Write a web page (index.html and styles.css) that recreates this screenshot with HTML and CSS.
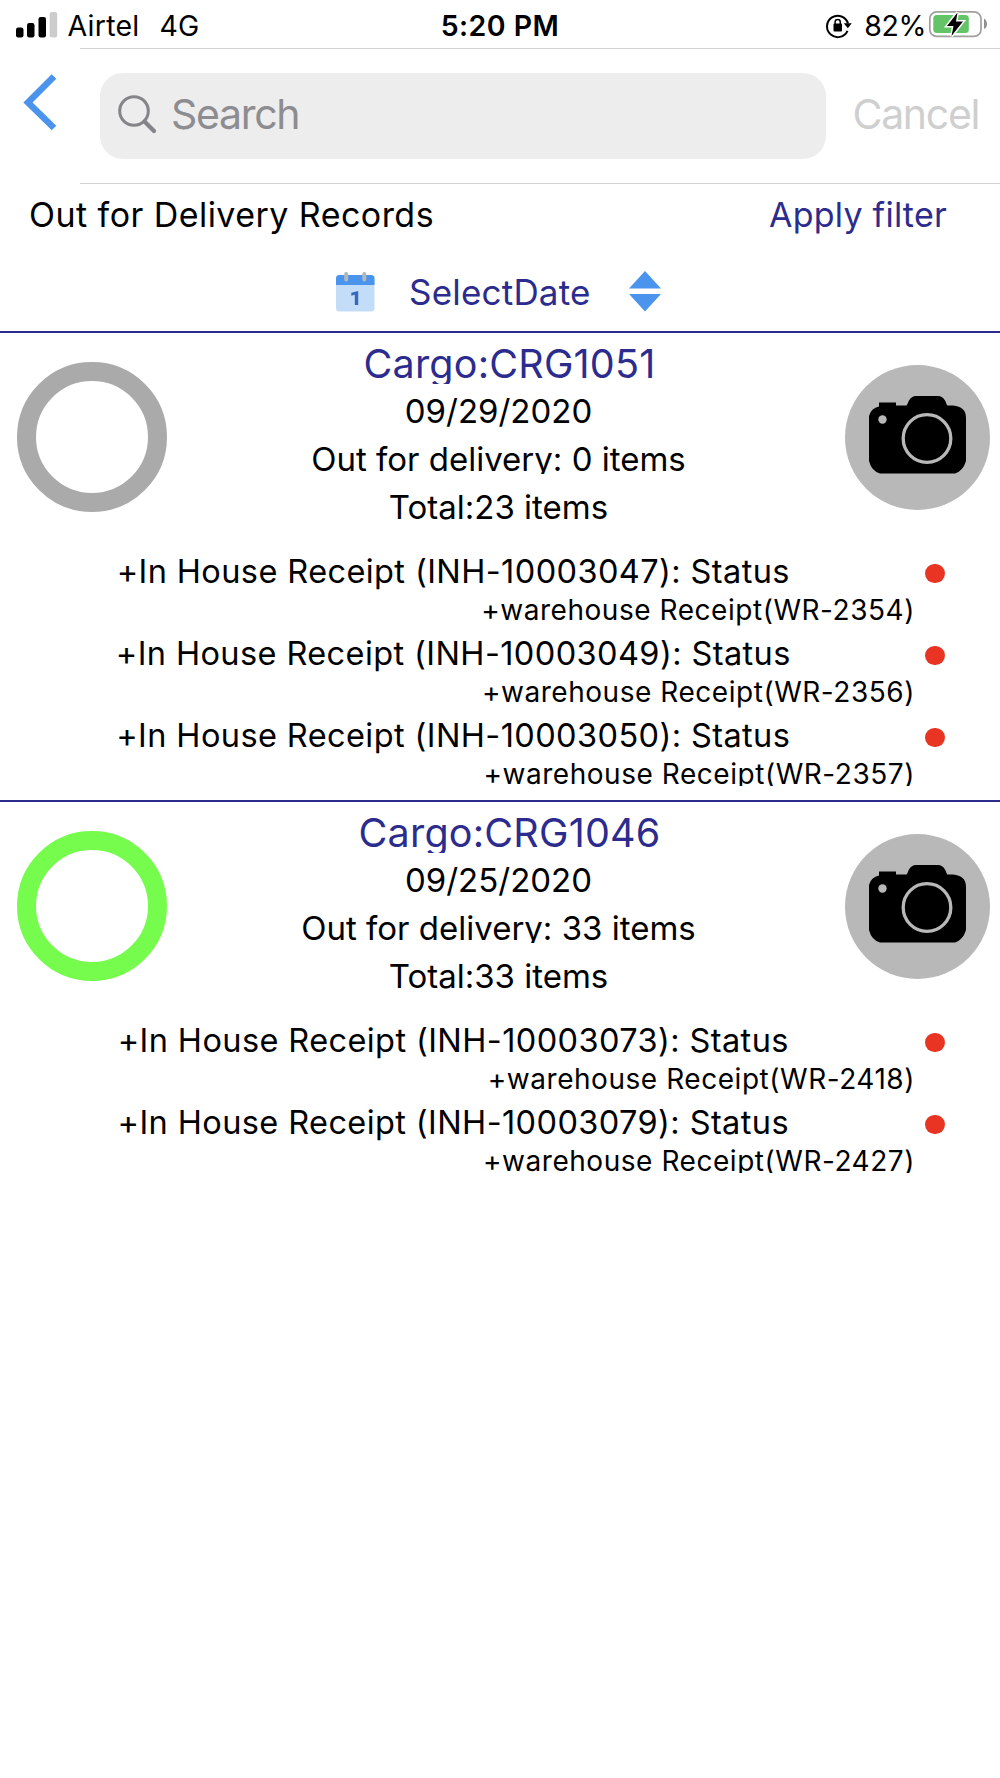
FILE: index.html
```
<!DOCTYPE html>
<html lang="en">
<head>
<meta charset="utf-8">
<title>Out for Delivery Records</title>
<link rel="stylesheet" href="styles.css">
</head>
<body>
<svg class="defs" width="0" height="0" aria-hidden="true">
  <symbol id="camera" viewBox="0 0 97 78">
    <path fill="#000" d="M10 9V6.500H27V9.500H37C38.500 9.500 38.500 7 40 4.500Q42.500 0 47 0H69Q73.500 0 76 4.500C77.500 7 77.500 9.500 79 9.500H84Q97 10.500 97 22V65Q94 75 86 77.500H11Q2.500 75 0 65V20Q2 12 10 10.500Z"/>
    <circle cx="58" cy="42.500" r="23.800" fill="none" stroke="#b8b8b8" stroke-width="3.300"/>
    <circle cx="13.500" cy="23.500" r="4.200" fill="#b8b8b8"/>
  </symbol>
</svg>

<header class="status">
  <div class="status-left">
    <svg width="42" height="26" viewBox="0 0 42 26">
      <rect x="0" y="15.500" width="7.500" height="10" rx="2.200"/>
      <rect x="11" y="11" width="7.500" height="14.500" rx="2.200"/>
      <rect x="22.500" y="5" width="7.500" height="20.500" rx="2.200"/>
      <rect x="33.700" y="0" width="7.500" height="25.500" rx="2.200" fill="#ccc"/>
    </svg>
    <span class="carrier">Airtel</span>
    <span class="network">4G</span>
  </div>
  <div class="clock">5:20 PM</div>
  <div class="status-right">
    <svg class="lock" width="28" height="26" viewBox="0 0 28 26">
      <path d="M22.500 17.800A10.700 10.700 0 1 1 23 10.500" fill="none" stroke="#000" stroke-width="2"/>
      <path d="M18.800 10.200H26.800L22.800 15.200Z"/>
      <rect x="8.500" y="10.500" width="8.500" height="8" rx="1"/>
      <path d="M10.100 12V9A2.600 2.600 0 0 1 15.300 9V12" fill="none" stroke="#000" stroke-width="1.500"/>
    </svg>
    <span class="percent">82%</span>
    <svg class="battery" width="60" height="30" viewBox="0 0 60 30">
      <rect x="1.800" y="2.800" width="51.200" height="24.600" rx="7" fill="none" stroke="#a0a0a0" stroke-width="1.700"/>
      <path d="M56 9.500Q59 11.500 59 15T56 20Z" fill="#909090"/>
      <rect x="5.300" y="6" width="35.500" height="18" rx="3.500" fill="#62c466"/>
      <path d="M29.500 3.500L19 17H25.500L23.500 27L35 12.500H28Z" stroke="#fff" stroke-width="3" paint-order="stroke"/>
    </svg>
  </div>
</header>

<nav class="nav">
  <a class="back">
    <svg width="36" height="62" viewBox="0 0 36 62"><path d="M32 4.500L6 30.500L32 56" fill="none" stroke="#4a94ee" stroke-width="6.500"/></svg>
  </a>
  <div class="search-bar">
    <div class="field">
      <svg width="40" height="40" viewBox="0 0 40 40" fill="none" stroke="#858589" stroke-linecap="round">
        <circle cx="16" cy="16" r="14.300" stroke-width="3"/>
        <path d="M26.500 26.500L36 36" stroke-width="4.300"/>
      </svg>
      <span>Search</span>
    </div>
    <div class="cancel">Cancel</div>
  </div>
</nav>

<section class="toolbar">
  <div class="title-row">
    <h1>Out for Delivery Records</h1>
    <a class="filter">Apply filter</a>
  </div>
  <div class="date-row">
    <svg width="39" height="40" viewBox="0 0 39 40">
      <rect x="0" y="3" width="38.500" height="36.500" rx="3.500" fill="#c3ddf8"/>
      <path d="M0 13V6.500Q0 3 3.500 3H35Q38.500 3 38.500 6.500V13Z" fill="#4a94ee"/>
      <rect x="8.200" y="0" width="4" height="9.500" rx="1.800" fill="#b2b9bc"/>
      <rect x="26.300" y="0" width="4" height="9.500" rx="1.800" fill="#b2b9bc"/>
      <path d="M18.800 33V22.800L15.300 23.800V20.700L22.200 19V33Z" fill="#3668bd"/>
    </svg>
    <span>SelectDate</span>
    <svg class="sort" width="32" height="41" viewBox="0 0 32 41" fill="#4a94ee"><path d="M0 17.500L16 0L32 17.500Z"/><path d="M0 23L16 40.500L32 23Z"/></svg>
  </div>
</section>

<article class="card">
  <div class="summary">
    <div class="ring"></div>
    <div class="details">
      <h2>Cargo:CRG1051</h2>
      <p class="date">09/29/2020</p>
      <p class="delivery">Out for delivery: 0 items</p>
      <p class="total">Total:23 items</p>
    </div>
    <div class="photo"><svg width="97" height="78"><use href="#camera"/></svg></div>
  </div>
  <ul class="receipts">
    <li><div class="house"><span>+In House Receipt (INH-10003047): Status</span><i></i></div><div class="warehouse">+warehouse Receipt(WR-2354)</div></li>
    <li><div class="house"><span>+In House Receipt (INH-10003049): Status</span><i></i></div><div class="warehouse">+warehouse Receipt(WR-2356)</div></li>
    <li><div class="house"><span>+In House Receipt (INH-10003050): Status</span><i></i></div><div class="warehouse">+warehouse Receipt(WR-2357)</div></li>
  </ul>
</article>

<article class="card">
  <div class="summary">
    <div class="ring done"></div>
    <div class="details">
      <h2>Cargo:CRG1046</h2>
      <p class="date">09/25/2020</p>
      <p class="delivery">Out for delivery: 33 items</p>
      <p class="total">Total:33 items</p>
    </div>
    <div class="photo"><svg width="97" height="78"><use href="#camera"/></svg></div>
  </div>
  <ul class="receipts">
    <li><div class="house"><span>+In House Receipt (INH-10003073): Status</span><i></i></div><div class="warehouse">+warehouse Receipt(WR-2418)</div></li>
    <li><div class="house"><span>+In House Receipt (INH-10003079): Status</span><i></i></div><div class="warehouse">+warehouse Receipt(WR-2427)</div></li>
  </ul>
</article>
</body>
</html>
```
FILE: styles.css
```
* { box-sizing: border-box; }

body {
  margin: 0;
  width: 1000px;
  min-height: 1778px;
  background: #fff;
  color: #000;
  font-family: Inter, "Liberation Sans", sans-serif;
  white-space: nowrap;
}

h1, h2, p, ul { margin: 0; padding: 0; font-weight: 400; list-style: none; }
svg { display: block; flex: none; }
.defs { display: none; }

/* Status bar */
.status {
  display: grid;
  grid-template-columns: 1fr auto 1fr;
  height: 48px;
  font-size: 28.5px;
  line-height: 52px;
}
.status-left { display: flex; padding-left: 16px; }
.status-left svg { margin-top: 11.5px; }
.carrier { margin-left: 9.5px; letter-spacing: 0.25px; }
.network { margin-left: 20px; }
.clock { font-weight: 600; letter-spacing: 0.45px; }
.status-right { display: flex; justify-content: flex-end; padding-right: 12px; }
.lock { margin-top: 12.5px; }
.percent { margin-left: 11px; letter-spacing: -0.4px; }
.battery { margin: 9px 0 0 2px; }

/* Navigation */
.nav { display: flex; height: 136px; }
.back { width: 80px; padding: 23.5px 0 0 22px; }
.search-bar {
  flex: 1;
  display: flex;
  border-top: 1px solid #d2d2d4;
  border-bottom: 1px solid #d2d2d4;
  padding-top: 24px;
  font-size: 41px;
  line-height: 83px;
  letter-spacing: -1.3px;
}
.field {
  display: flex;
  width: 726px;
  height: 86px;
  margin-left: 19.5px;
  padding-left: 18.5px;
  border-radius: 23px;
  background: #ededed;
  color: #8c8c91;
}
.field svg { margin-top: 22px; }
.field span { margin-left: 13px; }
.cancel { margin-left: 27px; color: #cfcfcf; }

/* Title and date controls */
.toolbar { height: 149px; border-bottom: 2px solid #2c2c8e; }
.title-row {
  display: flex;
  justify-content: space-between;
  height: 61px;
  padding: 0 53px 0 29px;
  font-size: 34px;
  line-height: 61px;
}
h1 { font-size: 34px; letter-spacing: 0.45px; }
.filter { color: #2c2c8e; letter-spacing: 0.24px; }
.date-row {
  display: flex;
  align-items: center;
  height: 86px;
  padding: 7px 0 0 336px;
  color: #2c2c8e;
  font-size: 35px;
  letter-spacing: 0.2px;
}
.date-row span { width: 220px; margin-left: 34px; }

/* Cargo cards */
.card { height: 469px; border-bottom: 2px solid #2c2c8e; }
.card:last-child { border-bottom: 0; }
.summary { display: flex; height: 219px; }
.ring {
  width: 150px;
  height: 150px;
  margin: 29px 0 0 17px;
  border: 19.3px solid #aaa;
  border-radius: 50%;
}
.ring.done { border-color: #76fc4c; }
.details {
  flex: 1;
  padding: 10px 30px 0 15px;
  text-align: center;
  font-size: 33px;
}
h2 {
  height: 41px;
  padding-left: 22px;
  overflow: hidden;
  color: #2c2c8e;
  font-size: 39.5px;
  line-height: 42px;
  letter-spacing: 0.2px;
}
.date { margin-top: 6px; line-height: 42px; }
.delivery { height: 29px; margin-top: 12.5px; line-height: 29px; overflow: hidden; }
.total { margin-top: 9.5px; line-height: 49px; }
.photo {
  display: flex;
  justify-content: center;
  width: 145px;
  height: 145px;
  margin: 32px 10px 0 0;
  padding-top: 31px;
  border-radius: 50%;
  background: #b8b8b8;
}

/* Receipt lines */
.receipts li { height: 82px; }
.house { display: flex; height: 38px; font-size: 32.5px; line-height: 40px; letter-spacing: 0.4px; }
.house span { width: 906.5px; text-align: center; }
.house i { width: 19.5px; height: 19.5px; margin: 11.5px 0 0 18.5px; border-radius: 50%; background: #e93323; }
.warehouse {
  height: 30px;
  margin-top: 5px;
  padding-right: 85px;
  text-align: right;
  font-size: 28px;
  line-height: 30px;
  letter-spacing: 0.54px;
}
li:last-child .warehouse { height: 24px; margin-top: 8px; line-height: 24px; overflow: hidden; }
```
